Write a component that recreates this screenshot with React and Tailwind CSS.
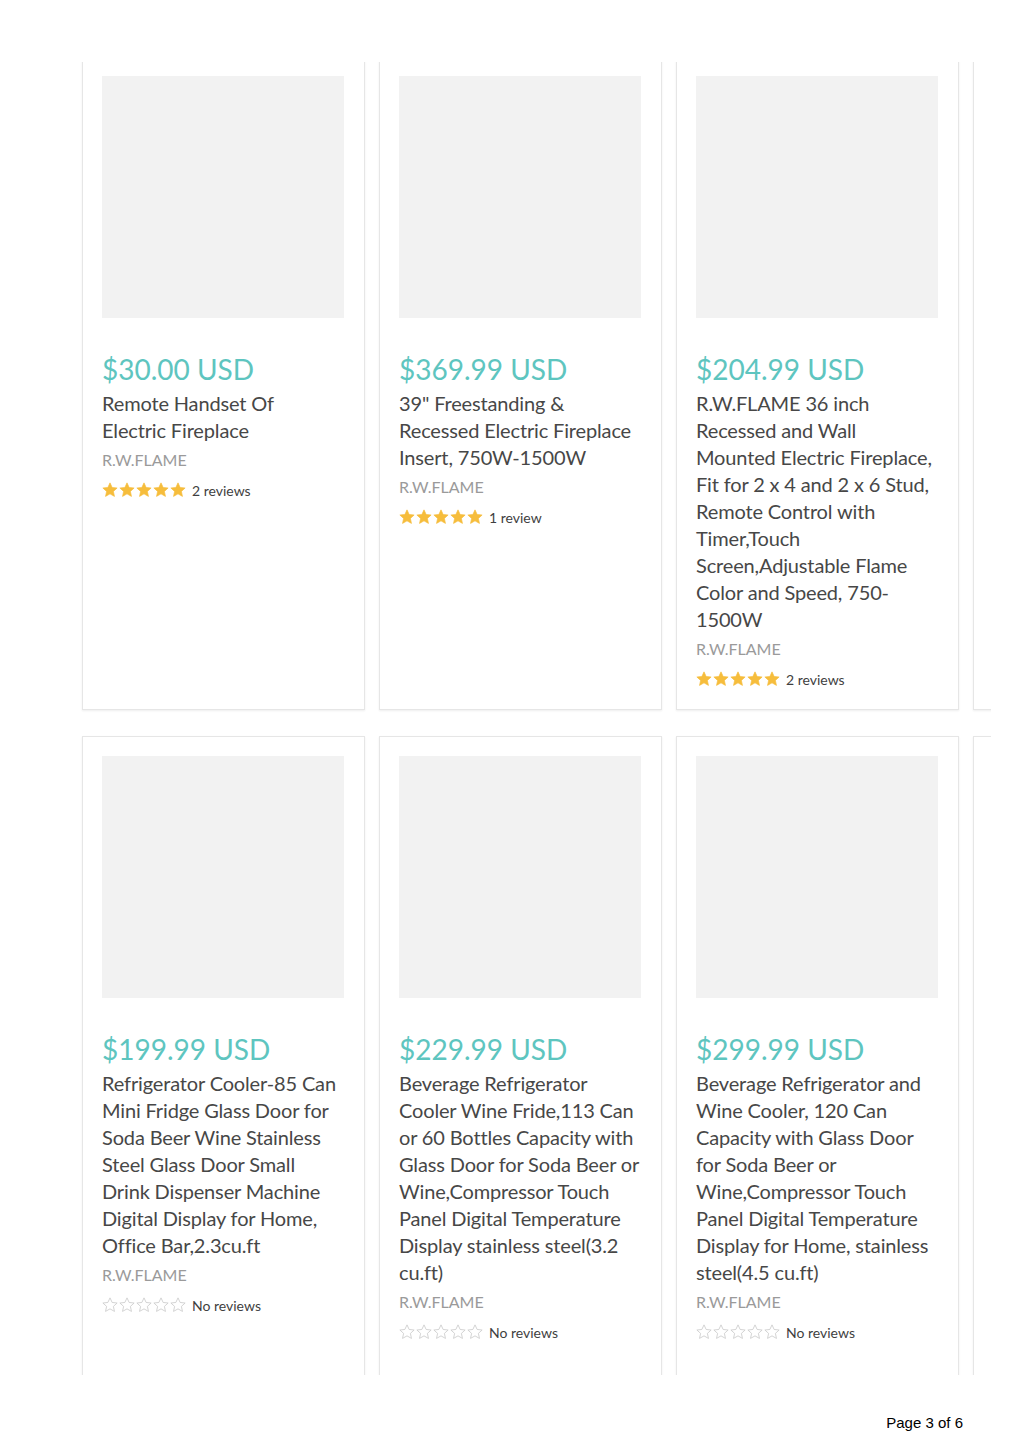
import React from 'react'

const products = [
  { price: '$30.00 USD', title: 'Remote Handset Of\nElectric Fireplace', reviews: '2 reviews', rated: true },
  { price: '$369.99 USD', title: '39" Freestanding & Recessed Electric Fireplace Insert, 750W-1500W', reviews: '1 review', rated: true },
  {
    price: '$204.99 USD',
    title: 'R.W.FLAME 36 inch Recessed and Wall Mounted Electric Fireplace, Fit for 2 x 4 and 2 x 6 Stud, Remote Control with Timer,Touch Screen,Adjustable Flame Color and Speed, 750-1500W',
    reviews: '2 reviews',
    rated: true
  },
  null,
  {
    price: '$199.99 USD',
    title: 'Refrigerator Cooler-85 Can Mini Fridge Glass Door for Soda Beer Wine Stainless Steel Glass Door Small Drink Dispenser Machine Digital Display for Home, Office Bar,2.3cu.ft',
    reviews: 'No reviews',
    rated: false
  },
  {
    price: '$229.99 USD',
    title: 'Beverage Refrigerator Cooler Wine Fride,113 Can or 60 Bottles Capacity with Glass Door for Soda Beer or Wine,Compressor Touch Panel Digital Temperature Display stainless steel(3.2 cu.ft)',
    reviews: 'No reviews',
    rated: false
  },
  {
    price: '$299.99 USD',
    title: 'Beverage Refrigerator and Wine Cooler, 120 Can Capacity with Glass Door for Soda Beer or Wine,Compressor Touch Panel Digital Temperature Display for Home, stainless steel(4.5 cu.ft)',
    reviews: 'No reviews',
    rated: false
  },
  null
]

function Star({ filled }) {
  return (
    <svg width="16" height="16" viewBox="0 0 24 24" className="shrink-0">
      <path
        d="M12 1.3l3.2 6.9 7.5.8-5.6 5.1 1.6 7.5L12 17.8l-6.7 3.8 1.6-7.5L1.3 9l7.5-.8z"
        fill={filled ? '#f6bd3c' : 'none'}
        stroke={filled ? '#f6bd3c' : '#c9c9c9'}
        strokeWidth={filled ? 1 : 1.2}
        strokeLinejoin="round"
      />
    </svg>
  )
}

function ProductCard({ product }) {
  if (!product) {
    return <div className="border border-[#e6e6e6] bg-white shadow-[0_1px_2px_rgba(0,0,0,0.07)]"></div>
  }
  return (
    <div className="border border-[#e6e6e6] bg-white px-[19px] pt-[19px] shadow-[0_1px_2px_rgba(0,0,0,0.07)] overflow-hidden">
      <div className="h-[242px] w-[242px] bg-[#f2f2f2]"></div>
      <div className="mt-[34px] text-[28px] leading-[34px] text-[#5ec5bf]">{product.price}</div>
      <div className="mt-[4px] whitespace-pre-line text-[20px] leading-[27px] tracking-[-0.15px] text-[#474747]">{product.title}</div>
      <div className="mt-[4px] text-[16px] leading-[24px] text-[#9a9a9a]">R.W.FLAME</div>
      <div className="mt-[8px] flex h-[20px] items-center">
        <div className="flex items-center gap-[1px]">
          {[0, 1, 2, 3, 4].map(i => (
            <Star key={i} filled={product.rated} />
          ))}
        </div>
        <span className="ml-[6px] text-[14px] text-[#3f3f3f]">{product.reviews}</span>
      </div>
    </div>
  )
}

export default function App() {
  return (
    <div className="w-[1024px] h-[1449px] bg-white pt-[62px] font-['Lato','Open_Sans',sans-serif]">
      <div className="w-[991px] h-[1313px] overflow-hidden">
        <div className="-mt-[6px] pl-[82px] grid grid-cols-[283px_283px_283px_283px] grid-rows-[654px_700px] gap-x-[14px] gap-y-[26px]">
          {products.map((p, idx) => (
            <ProductCard key={idx} product={p} />
          ))}
        </div>
      </div>
      <div className="mt-[39px] pr-[61px] text-right text-[15px] leading-[18px] text-black font-['Liberation_Sans',Arial,sans-serif]">
        Page 3 of 6
      </div>
    </div>
  )
}
